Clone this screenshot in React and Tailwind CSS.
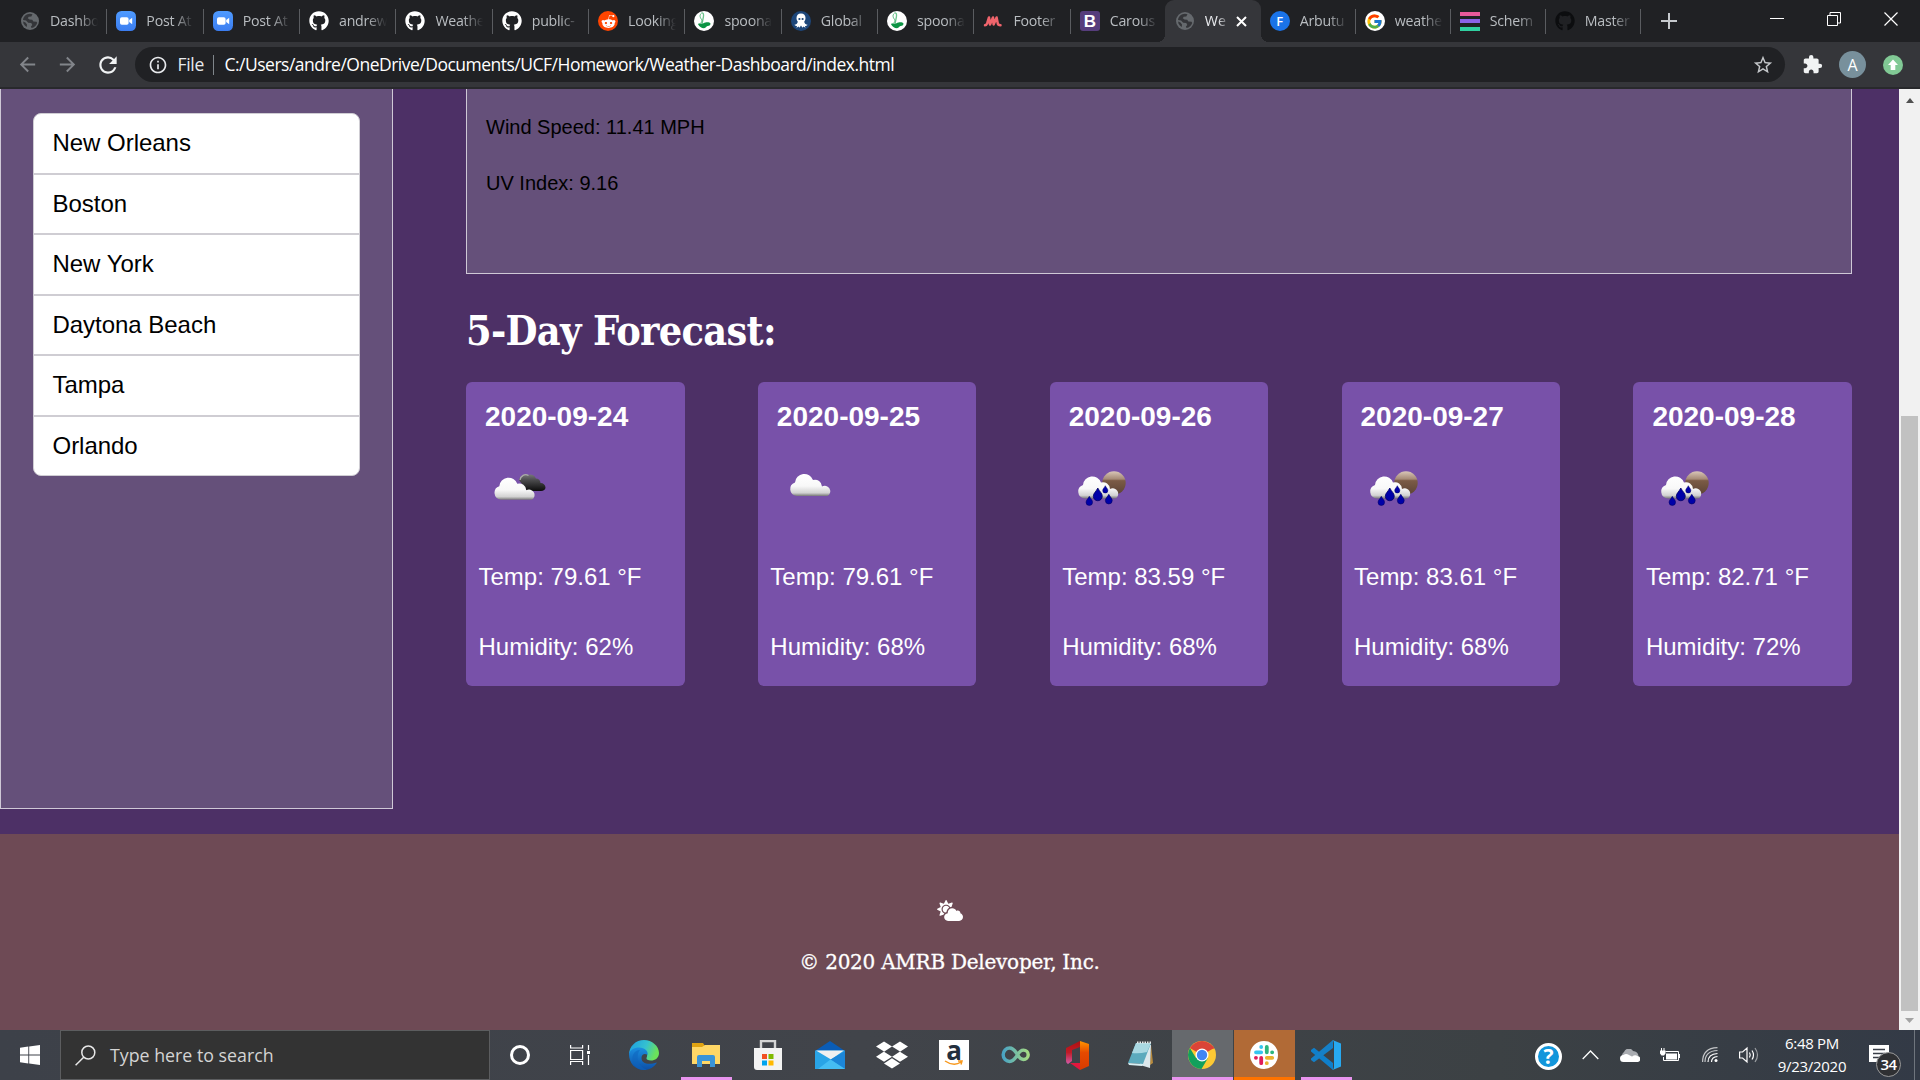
import React from "react";
import { FaGithub, FaRedditAlien, FaDropbox, FaCloudSun } from "react-icons/fa";
import { FcGoogle } from "react-icons/fc";
import { MdExtension, MdRefresh, MdStarBorder, MdArrowBack, MdArrowForward, MdInfoOutline } from "react-icons/md";

const Zoom = () => (
  <svg width="20" height="20" viewBox="0 0 20 20">
    <defs><linearGradient id="zm" x1="0" y1="0" x2="0" y2="1"><stop offset="0" stopColor="#4f9bff" /><stop offset="1" stopColor="#3b7df0" /></linearGradient></defs>
    <rect width="20" height="20" rx="5.5" fill="url(#zm)" />
    <rect x="4" y="6.3" width="8.6" height="7.4" rx="1.8" fill="#fff" />
    <path d="M13.2 9l3-2.3v6.6l-3-2.3z" fill="#fff" />
  </svg>
);
const Reddit = () => (
  <span className="flex size-5 items-center justify-center rounded-full bg-[#ff4500]"><FaRedditAlien size={15} color="#fff" /></span>
);
const Spoon = () => (
  <svg width="20" height="20" viewBox="0 0 20 20">
    <circle cx="10" cy="10" r="10" fill="#fff" />
    <path d="M7.500 2c3-.6 2 4 1.400 6.500l-1 5" fill="none" stroke="#6cc48d" strokeWidth="1.300" />
    <path d="M7.200 2.500c-2 2-1 4 .3 6s-.8 4.500-3 4.500" fill="none" stroke="#56b87c" strokeWidth="1" />
    <path d="M4 13c1.500-.8 3 .2 4.500-.3s2.500-1.700 4.500-1.500c2 0 3 .3 3.500 1.300-.3 2.500-1.500 2.200-3 2.500s-1.500 2-3.500 2.200c-2.500 0-5-1.500-6-4.200z" fill="#0c9444" />
  </svg>
);
const Octo = () => (
  <svg width="20" height="20" viewBox="0 0 20 20">
    <circle cx="10" cy="10" r="10" fill="#1d4679" />
    <path d="M10 2.500c-3 0-4.500 2-4.500 4.500 0 1.800.7 2.800 1.300 3.800-.3 2-1.800 3-3.300 3 .5 1.200 1.700 1.300 2.700.9l-.8 2 2.400-1.300.7 1.400L10 14.500l1.500 2.300.7-1.400 2.400 1.300-.8-2c1 .4 2.200.3 2.700-.9-1.500 0-3-1-3.300-3 .6-1 1.300-2 1.300-3.800 0-2.500-1.500-4.500-4.500-4.500z" fill="#fff" />
    <circle cx="8.400" cy="8" r="1.100" fill="#1d4679" /><circle cx="11.600" cy="8" r="1.100" fill="#1d4679" />
  </svg>
);
const Zig = () => (
  <svg width="20" height="20" viewBox="0 0 20 20">
    <path d="M2 14.200c1.300 0 1.700-.7 2.200-2L6 6.500l1 7L10 6.500l.6 7L13.600 6.500l1.200 6c.2 1.200.9 1.700 2.700 1.700" fill="none" stroke="#f0646c" strokeWidth="2.500" strokeLinejoin="round" strokeLinecap="round" />
  </svg>
);
const Boot = () => (
  <span className="flex size-5 items-center justify-center rounded-[3px] bg-[#563d7c] font-['Liberation_Sans'] text-[17px] font-bold leading-none text-white">B</span>
);
const BlueF = () => (
  <span className="flex size-5 items-center justify-center rounded-full bg-[#1a73e8] font-['Open_Sans'] text-[13px] font-semibold leading-none text-white">F</span>
);
const Google = () => (
  <span className="flex size-5 items-center justify-center rounded-full bg-white"><FcGoogle size={17} /></span>
);
const Schema = () => (
  <span className="flex h-[19px] w-5 flex-col justify-between"><i className="h-1 bg-[#e85a9b]" /><i className="h-1 bg-[#8b63e6]" /><i className="h-1 bg-[#30cfa0]" /></span>
);
const Globe = () => (
  <svg width="18" height="18" viewBox="0 0 18 18">
    <circle cx="9" cy="9" r="9" fill="#65696d" />
    <path d="M11.500 2.300l-1.200 2.200-2.600.2-.9 1.500 1.700 1.300 2.700.2 1.200 1.700 3.200.3.600 1.300c-.8 2.600-2.900 4.600-5.700 5.100l-.6-1.700 1.400-1.500-1-1.800-3.100-.4L5 8.400 2 8c.4-3.300 3.300-6.200 7-6.200.9 0 1.700.2 2.500.5z" fill="#2b2d30" opacity=".85" />
    <path d="M2.100 9.500l2.400.9 1.500 2.200-.2 2.500C3.700 14 2.300 12 2.100 9.500z" fill="#2b2d30" opacity=".85" />
  </svg>
);
const Git = () => <FaGithub size={20} color="#fff" />;
const GitDark = () => <FaGithub size={20} color="#0c0d0f" />;

const before = [
  [Globe, "Dashbo"], [Zoom, "Post At"], [Zoom, "Post At"], [Git, "andrew"], [Git, "Weathe"], [Git, "public-"],
  [Reddit, "Looking"], [Spoon, "spoona"], [Octo, "Global"], [Spoon, "spoona"], [Zig, "Footer"], [Boot, "Carous"],
];
const after = [[BlueF, "Arbutu"], [Google, "weathe"], [Schema, "Schem"], [GitDark, "Master"]];

function Tab({ Icon, label, last, wide }) {
  return (
    <div className={(last ? "w-[94px]" : wide ? "w-[96.35px]" : "w-[95px]") + " flex h-[42px] shrink-0 items-center pl-[9px]"}>
      <span className="flex w-5 shrink-0 justify-center"><Icon /></span>
      <span className="ml-[10px] w-[49px] shrink-0 whitespace-nowrap text-[14.2px] tracking-[-0.25px] text-[#b9bdc1] [mask-image:linear-gradient(to_right,black_58%,transparent_98%)]">{label}</span>
      <span className={(last ? "bg-transparent" : "bg-[#5a5c60]") + " ml-auto h-[25px] w-px"} />
    </div>
  );
}

function TabStrip() {
  return (
    <div className="flex h-[42px] items-center bg-[#202124] pl-[11px]">
      {before.map(([I, l], i) => <Tab key={i} Icon={I} label={l} wide last={i === 11} />)}
      <div className="relative flex h-[42px] w-[96px] shrink-0 items-center rounded-t-[9px] bg-[#35363a] pl-[10px] text-white">
        <i className="absolute -left-2 bottom-0 size-2 bg-[radial-gradient(circle_at_0_0,#202124_8px,#35363a_8px)]" />
        <i className="absolute -right-2 bottom-0 size-2 bg-[radial-gradient(circle_at_100%_0,#202124_8px,#35363a_8px)]" />
        <span className="flex w-5 justify-center"><Globe /></span>
        <span className="ml-[10px] w-[22px] whitespace-nowrap text-[14.2px] text-[#e8eaed] [mask-image:linear-gradient(to_right,black_60%,transparent_110%)]">We</span>
        <svg className="ml-[9px]" width="11" height="11" viewBox="0 0 11 11"><path d="M1 1l9 9M10 1l-9 9" stroke="#fff" strokeWidth="2" /></svg>
      </div>
      {after.map(([I, l], i) => <Tab key={i} Icon={I} label={l} />)}
      <svg className="ml-[20px]" width="16" height="16" viewBox="0 0 16 16"><path d="M8 0v16M0 8h16" stroke="#c6c9cd" strokeWidth="2" /></svg>
      <div className="ml-auto flex items-center pr-[22px] pb-[5px]">
        <svg width="14" height="14" viewBox="0 0 14 14"><path d="M0 6.500h14" stroke="#fff" /></svg>
        <svg className="ml-[43px]" width="14" height="14" viewBox="0 0 14 14" fill="none" stroke="#fff"><path d="M.5 3.500h10v10h-10zM3 3V.5h10.500V11H11" /></svg>
        <svg className="ml-[43px]" width="14" height="14" viewBox="0 0 14 14"><path d="M.5.5l13 13M13.500.5l-13 13" stroke="#fff" strokeWidth="1.200" /></svg>
      </div>
    </div>
  );
}

function Toolbar() {
  return (
    <div className="flex h-[47px] items-center border-b-2 border-[#28292c] bg-[#35363a] pl-4">
      <MdArrowBack size={23} color="#82858a" />
      <MdArrowForward className="ml-[17px]" size={23} color="#82858a" />
      <MdRefresh className="ml-[16px]" size={26} color="#f1f3f4" />
      <div className="ml-[14px] flex h-[35px] w-[1650px] items-center rounded-full bg-[#202124] pl-[12.500px] text-[17.5px] text-white">
        <MdInfoOutline size={20} color="#e8eaed" />
        <span className="ml-[10px] w-[26px] tracking-[-0.3px] text-[#e8eaed]">File</span>
        <i className="ml-[9px] h-5 w-px bg-[#80868b]" />
        <span className="ml-[11px] whitespace-nowrap tracking-[-0.505px]">C:/Users/andre/OneDrive/Documents/UCF/Homework/Weather-Dashboard/index.html</span>
        <MdStarBorder className="ml-auto mr-[11px]" size={22} color="#c4c7ca" />
      </div>
      <MdExtension className="ml-[17px]" size={21} color="#f1f3f4" />
      <span className="ml-4 flex size-[27px] items-center justify-center rounded-full bg-[#78909c] text-[16px] leading-none text-white">A</span>
      <svg className="ml-[17px]" width="20" height="20" viewBox="0 0 20 20"><circle cx="10" cy="10" r="10" fill="#81c995" /><path d="M10 4.500l5 5.500h-2.700v5H7.700v-5H5z" fill="#fff" /></svg>
    </div>
  );
}

const cities = ["New Orleans", "Boston", "New York", "Daytona Beach", "Tampa", "Orlando"];
const days = [
  ["2020-09-24", "broken", "79.61", "62"], ["2020-09-25", "cloud", "79.61", "68"], ["2020-09-26", "rain", "83.59", "68"],
  ["2020-09-27", "rain", "83.61", "68"], ["2020-09-28", "rain", "82.71", "72"],
];
const drops = [[20.3, 41.3, 0.9], [28.8, 33, 1.25], [36.3, 30.7, 0.72], [39.8, 39.3, 0.95]];
const cloud = "M7 23a7 7 0 0 1-1.500-13.600A9.300 9.300 0 0 1 23.500 7a7 7 0 0 1 9 6.500A5.200 5.200 0 1 1 38 23z";

function WeatherIcon({ kind }) {
  return (
    <svg width="70" height="56" viewBox="0 0 70 56">
      <defs>
        <linearGradient id="cw" x1="0" y1="0" x2="0" y2="1"><stop offset="0" stopColor="#fff" /><stop offset=".55" stopColor="#f8f8f8" /><stop offset=".86" stopColor="#d2d2d2" /><stop offset="1" stopColor="#777" /></linearGradient>
        <linearGradient id="cd" x1="0" y1="0" x2="0" y2="1"><stop offset="0" stopColor="#77777a" /><stop offset=".35" stopColor="#4a4a4c" /><stop offset="1" stopColor="#0c0c0c" /></linearGradient>
        <linearGradient id="mn" x1="0" y1="0" x2="0" y2="1"><stop offset="0" stopColor="#d9c6b8" /><stop offset=".33" stopColor="#a68a76" /><stop offset=".4" stopColor="#7b5b46" /><stop offset="1" stopColor="#5c4334" /></linearGradient>
      </defs>
      {kind === "broken" && (
        <>
          <path d="M34 25a6.500 6.500 0 0 1 9-5 6 6 0 0 1 8 3.500 4.500 4.500 0 0 1 4.500 4.500 4.700 4.700 0 0 1 5 4.500c0 2.200-2 3.500-4.500 3.500H42z" fill="url(#cd)" />
          <path d="M35 25c.5-4.500 5-6.500 8.500-4.500" fill="none" stroke="#aaa" strokeWidth="1.300" />
          <path d={cloud} transform="translate(8.800 21.800)" fill="url(#cw)" />
        </>
      )}
      {kind === "cloud" && <path d={cloud} transform="translate(12.500 18)" fill="url(#cw)" />}
      {kind === "rain" && (
        <>
          <circle cx="45" cy="28" r="11.700" fill="url(#mn)" />
          <path d={cloud} transform="translate(8.500 20.500)" fill="url(#cw)" />
          {drops.map(([x, y, s]) => (
            <path key={x} d="M0 0c1.500 3 3.600 4.200 3.600 6.600a3.600 3.600 0 0 1-7.200 0C-3.600 4.200-1.500 3 0 0z" transform={`translate(${x} ${y}) scale(${s})`} fill="#0000a8" stroke="#000060" strokeWidth=".6" />
          ))}
        </>
      )}
    </svg>
  );
}

function Page() {
  return (
    <div className="flex h-[941px] bg-[#4d3066] font-['Liberation_Sans',sans-serif]">
      <div className="flex w-[1899px] flex-col">
        <main className="flex h-[745px]">
          <aside className="h-[720px] w-[393px] border border-t-0 border-[#cfc8d6] bg-[#65507a] px-8 pt-6">
            <ul className="flex h-[363px] flex-col overflow-hidden rounded-[8px] border border-[#cfcdd3] bg-white">
              {cities.map((c, i) => (
                <li key={c} className={(i < 5 ? "border-b-2 " : "") + "flex flex-1 items-center border-[#cfcdd3] pl-[18.500px] text-2xl tracking-[-0.03px] text-black"}>{c}</li>
              ))}
            </ul>
          </aside>
          <section className="ml-[73px] w-[1386px]">
            <div className="h-[185px] border border-t-0 border-[#cfc8d6] bg-[#65507a] pl-[19px] pt-[23px] text-xl leading-[30px] text-black">
              <p>Wind Speed: 11.41 MPH</p>
              <p className="mt-[26px]">UV Index: 9.16</p>
            </div>
            <h1 className="mt-[30px] h-[54px] whitespace-nowrap font-['DejaVu_Serif_Condensed','DejaVu_Serif',serif] text-[41px] font-bold leading-[54px] tracking-[-0.7px] text-white">5-Day Forecast:</h1>
            <div className="mt-6 flex justify-between">
              {days.map(([d, k, t, h]) => (
                <article key={d} className="h-[304px] w-[218.6px] rounded-[6px] bg-[#7851a9] pt-[18px] text-2xl text-white">
                  <h2 className="pl-[19px] text-[28px] font-bold leading-[34px]">{d}</h2>
                  <div className="mt-[21px] h-[50px] pl-[19px]"><WeatherIcon kind={k} /></div>
                  <p className="mt-[54px] pl-[12.500px] leading-9">Temp: {t} °F</p>
                  <p className="mt-[34px] pl-[12.500px] leading-9">Humidity: {h}%</p>
                </article>
              ))}
            </div>
          </section>
        </main>
        <footer className="flex h-[196px] flex-col items-center bg-[#6e4a55] pt-[66px] text-white">
          <FaCloudSun size={26} className="h-[21px]" />
          <p className="mt-[26px] whitespace-nowrap font-['DejaVu_Serif',serif] text-[20px] leading-[30px] tracking-[-0.25px] [-webkit-text-stroke:0.3px_white]">© 2020 AMRB Delevoper, Inc.</p>
        </footer>
      </div>
      <div className="flex w-[21px] flex-col items-center bg-[#f1f1f1]">
        <svg className="mt-[9px]" width="8" height="5" viewBox="0 0 8 5"><path d="M0 5l4-5 4 5z" fill="#505050" /></svg>
        <div className="mt-[313px] h-[595px] w-[17px] bg-[#c1c1c1]" />
        <svg className="mt-[7px]" width="9" height="5" viewBox="0 0 9 5"><path d="M0 0h9L4.500 5z" fill="#a3a3a3" /></svg>
      </div>
    </div>
  );
}

const Edge = () => (
  <svg width="30" height="30" viewBox="0 0 30 30">
    <defs>
      <linearGradient id="e1" x1="0" y1="0" x2="1" y2=".3"><stop offset="0" stopColor="#1b9de2" /><stop offset=".6" stopColor="#35c1d0" /><stop offset="1" stopColor="#6be35a" /></linearGradient>
      <linearGradient id="e2" x1="0" y1="0" x2="0" y2="1"><stop offset="0" stopColor="#1b8fe0" /><stop offset="1" stopColor="#0c4fa8" /></linearGradient>
    </defs>
    <path d="M0 15C0 6 7 0 15 0s15 6 15 13c0 5-4 7.500-8 7.500-3 0-5-1-4.500-2.500C19.500 14 17 9.500 12 9.500 6 9.500 0 13 0 15z" fill="url(#e1)" />
    <path d="M0 14C1 10 5 7.500 10 7.500c6 0 9.500 4 8.500 7.500-2-2-6-1.500-6 3 0 5 6 7.500 15.500 4.500C25.500 27 20.500 30 15 30 6 30 0 23 0 14z" fill="url(#e2)" />
    <path d="M11 10c-5 6-2 17 7 19.700C9 32 1 24 4 15c1.500-3.500 4-5 7-5z" fill="#0f64bd" opacity=".55" />
  </svg>
);
const Explorer = () => (
  <svg width="30" height="26" viewBox="0 0 30 26"><path d="M1 1h11l2 3v4H1z" fill="#e0a312" /><path d="M1 5h10l3-2h15v19H1z" fill="#ffd766" /><path d="M6 25V15q0-2 2-2h14q2 0 2 2v10h-5v-6h-8v6z" fill="#3a94d8" /></svg>
);
const Store = () => (
  <svg width="30" height="30" viewBox="0 0 30 30"><path d="M8 9V1h14v8" fill="none" stroke="#d5d5d5" strokeWidth="2.400" /><path d="M1 8h28v22H4q-3 0-3-3z" fill="#f3f3f3" /><path d="M9 14h5v5H9z" fill="#f25022" /><path d="M15.500 14h5v5h-5z" fill="#7fba00" /><path d="M9 20.500h5v5H9z" fill="#00a4ef" /><path d="M15.500 20.500h5v5h-5z" fill="#ffb900" /></svg>
);
const Mail = () => (
  <svg width="30" height="28" viewBox="0 0 30 28"><path d="M0 10L15 0l15 10z" fill="#0a5cb5" /><path d="M0 9.500h30V28H0z" fill="#29a4e6" /><path d="M1 9.500h28L16 18.500z" fill="#f0f0f0" /><path d="M30 10L15.500 18.500 30 28z" fill="#1c86d8" /><path d="M3 28L15.500 18.500 30 28z" fill="#45bdf3" /></svg>
);
const Amazon = () => (
  <span className="flex size-[30px] flex-col items-center bg-white font-['Open_Sans'] text-[26px] font-bold leading-[20px] text-[#232f3e]">a
    <svg width="20" height="6" viewBox="0 0 20 6"><path d="M1 1q9 6 16 1M14 1h4l-1 3.500" fill="none" stroke="#f7981d" strokeWidth="1.500" /></svg>
  </span>
);
const Infinity8 = () => (
  <svg width="30" height="20" viewBox="0 0 30 20"><defs><linearGradient id="inf"><stop offset="0" stopColor="#49a3c4" /><stop offset="1" stopColor="#a5db83" /></linearGradient></defs><path d="M16.500 10C14 14 12 16.500 8.700 16.500a6.500 6.700 0 0 1 0-13.500c4 0 6.300 4 8.300 7.500 1.500 2.500 3.300 4 5.500 4a4.700 4.700 0 0 0 0-9.400c-2.700 0-4.500 2-6 4.900z" fill="none" stroke="url(#inf)" strokeWidth="3.400" /></svg>
);
const Office = () => (
  <svg width="24" height="29" viewBox="0 0 24 29"><defs><linearGradient id="of" x1="0" y1="0" x2="0" y2="1"><stop offset="0" stopColor="#b0100f" /><stop offset=".5" stopColor="#c01c28" /><stop offset="1" stopColor="#d45aa8" /></linearGradient><linearGradient id="og" x1="0" y1="0" x2="0" y2="1"><stop offset="0" stopColor="#ff9500" /><stop offset=".4" stopColor="#e64a00" /><stop offset="1" stopColor="#d83b01" /></linearGradient></defs><path d="M0 7L14 0v6L6 9v11l-4 3q-2-1-2-3z" fill="url(#of)" /><path d="M14 0l9 3v22l-9 4z" fill="url(#og)" /><path d="M4 22h10v7z" fill="#e3173e" /></svg>
);
const Notepad = () => (
  <svg width="28" height="28" viewBox="0 0 28 28"><path d="M25 4l2 18-3 2z" fill="#b98b3d" /><path d="M15 3l10 1-1 23-10-3z" fill="#dce8ec" /><path d="M10 2h15l-8 21-15-1z" fill="#5caabd" /><path d="M10 2h15l-4 9q-8 2-15 1z" fill="#a9d8e2" /><path d="M2 22l15 1-1 2-13-1z" fill="#d8eef2" /><path d="M11 1.500h14" stroke="#e9e9e9" strokeWidth="2" strokeDasharray="1.500 1" /></svg>
);
const Chrome = () => (
  <svg width="28" height="28" viewBox="0 0 28 28"><circle cx="14" cy="14" r="14" fill="#fcc934" /><path d="M14 14L1.900 7A14 14 0 0 1 26.100 7z" fill="#db4437" /><path d="M14 7.500h12.300L25 5.200 14 3z" fill="#db4437" /><path d="M1.900 7A14 14 0 0 0 13.500 28l6.200-10.500L14 14 8 17z" fill="#12a05c" /><circle cx="14" cy="14" r="6.500" fill="#fff" /><circle cx="14" cy="14" r="5.200" fill="#4285f4" /></svg>
);
const Slack = () => (
  <svg width="28" height="28" viewBox="0 0 28 28"><circle cx="14" cy="14" r="14" fill="#fff" /><g strokeWidth="3.800" strokeLinecap="round"><path d="M6 11.300h5.200M11.200 5.900v.1" stroke="#36c5f0" /><path d="M16.800 5.900v5.400M22.200 11.300h-.1" stroke="#2eb67d" /><path d="M16.800 16.800h5.400M16.800 22.200v-.1" stroke="#ecb22e" /><path d="M11.200 16.800v5.400M5.900 16.800h.1" stroke="#e01e5a" /></g></svg>
);
const VSCode = () => (
  <svg width="30" height="30" viewBox="0 0 30 30"><path d="M0 10l3-2.300L22 23v7L0 11.500z" fill="#0f7fcb" /><path d="M0 20l3 2.300L22 8V0L0 18.500z" fill="#1580c8" /><path d="M21.500 0L30 3.500v23L21.500 30q1.500-1 1.500-3V3q0-2-1.500-3z" fill="#27a9f1" /></svg>
);

const apps = [
  [Edge], [Explorer, "pink"], [Store], [Mail], [() => <FaDropbox size={32} color="#fff" />], [Amazon], [Infinity8], [Office], [Notepad],
  [Chrome, "active"], [Slack, "orange"], [VSCode, "pink"],
];
const cell = { active: "bg-[#66696d]", orange: "bg-[#b16a36]" };
const line = { pink: "w-[51px] bg-[#e894ee]", active: "w-[61px] bg-[#e894ee]", orange: "w-[61px] bg-[#ff7300]" };

function Taskbar() {
  return (
    <div className="flex h-[50px] items-center bg-[linear-gradient(90deg,#3d4149_0%,#41444a_45%,#3c4144_78%,#333a46_100%)] font-['Open_Sans',sans-serif] text-white">
      <div className="flex w-[60px] justify-center">
        <svg width="20" height="20" viewBox="0 0 20 20" fill="#fff"><path d="M0 2.800L8.300 1.600v8H0zM9.200 1.500L20 0v9.600H9.200zM0 10.400h8.300v8L0 17.200zM9.200 10.400H20V20L9.200 18.500z" /></svg>
      </div>
      <div className="flex h-[50px] w-[430px] items-center border border-[#5c5d5f] bg-[#333333] pl-[14px]">
        <svg width="21" height="21" viewBox="0 0 21 21" fill="none" stroke="#e8e8e8" strokeWidth="1.500"><circle cx="13.300" cy="7.500" r="6.500" /><path d="M8.700 12.200L.6 20.300" /></svg>
        <span className="ml-[14px] whitespace-nowrap text-[17.800px] text-[#d4d4d4]">Type here to search</span>
      </div>
      <div className="flex w-[60px] justify-center"><i className="size-5 rounded-full border-[3px] border-white" /></div>
      <div className="flex w-[60px] justify-center">
        <svg width="21" height="20" viewBox="0 0 21 20" fill="none" stroke="#fff" strokeWidth="1.200"><path d="M.6 0v3h12V0M.6 5.500h12v9H.6zM.6 20v-3.500h12V20M18.500 0v5M18.500 10v10" /><path d="M17 6h3v3h-3z" fill="#fff" stroke="none" /></svg>
      </div>
      <div className="ml-[3px] flex">
        {apps.map(([I, s], i) => (
          <div key={i} className="flex h-[50px] w-[62px] justify-center">
            <div className={(cell[s] || "") + " relative flex h-[50px] w-[61px] items-center justify-center"}>
              <I />
              {s && <i className={line[s] + " absolute bottom-0 h-[3px]"} />}
            </div>
          </div>
        ))}
      </div>
      <div className="ml-auto flex items-center">
        <span className="mt-[3px] flex size-[27px] items-center justify-center rounded-full border-[3px] border-white bg-[#1296db] text-[21px] font-bold leading-none">?</span>
        <svg className="ml-[20px]" width="17" height="10" viewBox="0 0 17 10"><path d="M.7 9l7.800-8 7.800 8" fill="none" stroke="#fff" strokeWidth="1.300" /></svg>
        <svg className="ml-[21px]" width="20" height="13" viewBox="0 0 20 13"><path d="M3 9A4 4 0 0 1 4 3a5 5 0 0 1 9-1q5 .5 5.500 5z" fill="#a9acb1" /><path d="M3.500 13a3.500 3.500 0 0 1 0-7Q6 4 9 6l3 1.500q3-2 5.500-.5a3 3 0 0 1-.5 6z" fill="#fff" /></svg>
        <svg className="ml-[20px]" width="20" height="14" viewBox="0 0 20 14"><path d="M5.500 3.500h13v9h-15V9" fill="none" stroke="#fff" /><path d="M6 5.500h11v6H6zM19 6h1v4h-1zM0 2.500h5.500v3L4 7.500H1.500L0 5.500zM1 0h1v3H1zM3.500 0h1v3h-1z" fill="#fff" /></svg>
        <svg className="ml-[22px]" width="17" height="16" viewBox="0 0 17 16" fill="none" stroke="#fff" strokeWidth="1.200"><circle cx="14" cy="13.500" r="1.500" fill="#fff" stroke="none" /><path d="M9.500 15q0-5 6-5.500M6 15Q6 7 15.500 6.500" /><path d="M3 15Q3 4 15.500 3.500M.6 15Q.6 1 15.500.6" opacity=".7" /></svg>
        <svg className="ml-[20px]" width="21" height="18" viewBox="0 0 21 18" fill="none" stroke="#fff" strokeWidth="1.200"><path d="M.6 6h3L8 2v14l-4.400-4h-3zM10.500 6.500q1.500 2.500 0 5M13 4.500q3 4.500 0 9" /><path d="M16 2q5 7 0 14" opacity=".5" /></svg>
        <div className="ml-[17px] w-[70px] whitespace-nowrap text-center text-[15px] leading-[23px] tracking-[-0.300px]">
          <div>6:48 PM</div>
          <div>9/23/2020</div>
        </div>
        <div className="relative ml-[22px] h-[36px] w-[34px]">
          <svg className="absolute left-0 top-[8px]" width="20" height="20" viewBox="0 0 20 20"><path d="M0 0h20v17h-9l-3 3v-3H0z" fill="#fff" /><path d="M4 4.500h12M4 8.500h12M4 12.500h8" stroke="#3a3f48" strokeWidth="1.300" /></svg>
          <span className="absolute left-[7px] top-[15px] flex size-[25px] items-center justify-center rounded-full border border-[#9a9a9a] bg-[#2f3033] text-[15px] font-semibold leading-none tracking-[-0.5px]">34</span>
        </div>
        <i className="ml-[11px] h-[50px] w-px bg-[#6f757d]" />
        <i className="w-[5px]" />
      </div>
    </div>
  );
}

export default function App() {
  return (
    <div className="h-[1080px] w-[1920px] overflow-hidden bg-[#202124] font-['Open_Sans',sans-serif]">
      <TabStrip />
      <Toolbar />
      <Page />
      <Taskbar />
    </div>
  );
}
